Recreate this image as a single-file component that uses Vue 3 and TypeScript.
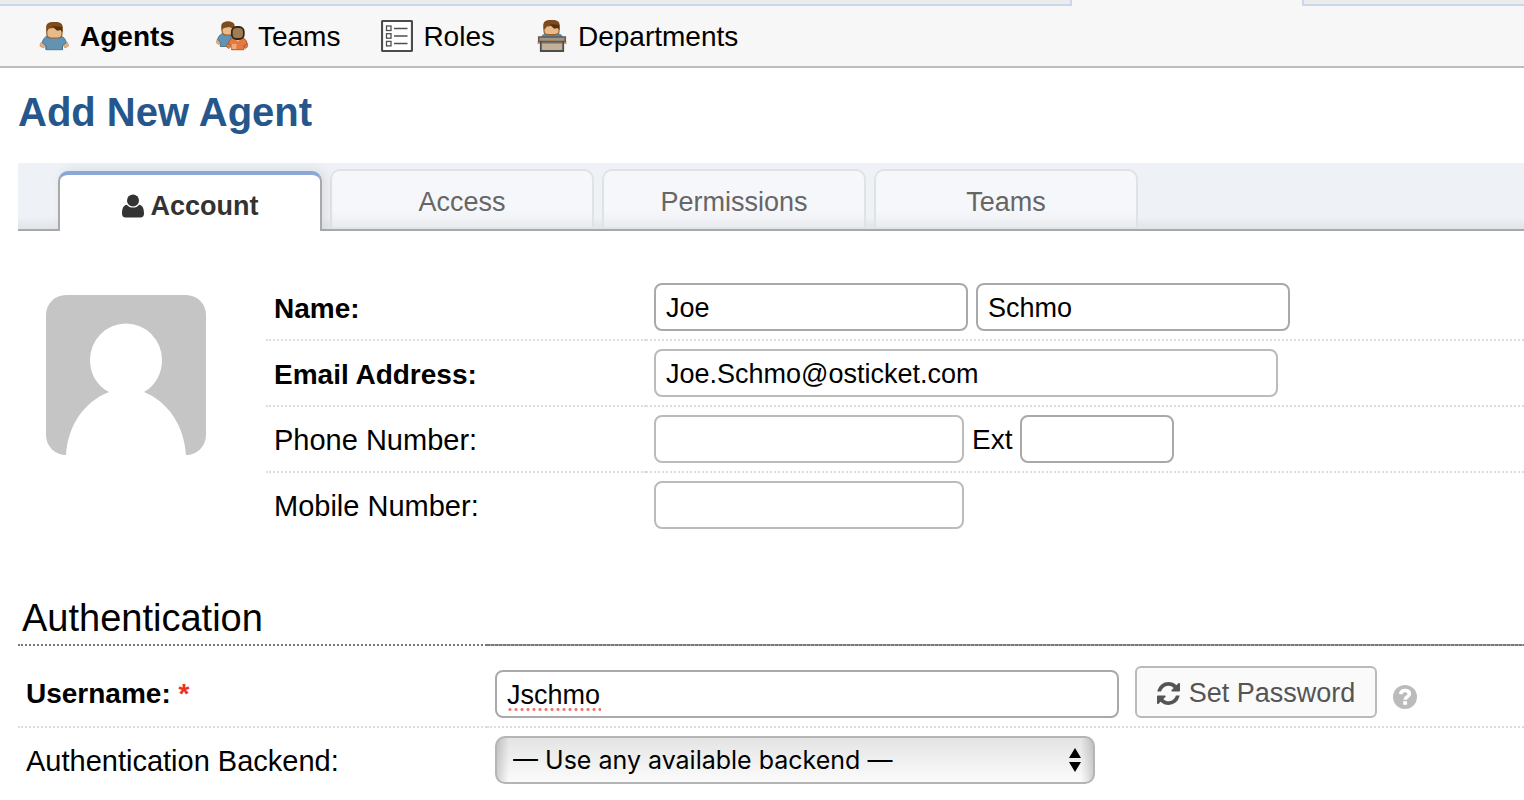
<script setup lang="ts">
import { ref } from 'vue'

interface NavItem {
  id: 'agents' | 'teams' | 'roles' | 'departments'
  label: string
}

const navItems: NavItem[] = [
  { id: 'agents', label: 'Agents' },
  { id: 'teams', label: 'Teams' },
  { id: 'roles', label: 'Roles' },
  { id: 'departments', label: 'Departments' },
]
const activeNav = 'agents'

const tabs: string[] = ['Account', 'Access', 'Permissions', 'Teams']
const activeTab = ref('Account')

const firstName = ref('Joe')
const lastName = ref('Schmo')
const email = ref('Joe.Schmo@osticket.com')
const phone = ref('')
const extension = ref('')
const mobile = ref('')
const username = ref('Jschmo')
const backend = ref('')
</script>

<template>
  <div class="page">
    <div class="strip">
      <span class="strip-left"></span>
      <span class="strip-current"></span>
      <span class="strip-right"></span>
    </div>

    <nav class="subnav">
      <a
        v-for="item in navItems"
        :key="item.id"
        href="#"
        class="subnav-item"
        :class="{ current: item.id === activeNav }"
      >
        <svg v-if="item.id === 'agents'" class="nav-icon" viewBox="0 0 32 32" aria-hidden="true">
          <path d="M6 20.500C3.500 21.500 2 23.500 2 26l3.500 2 2-3zM26.500 20.500c2.500 1 4 3 4 5.500l-3.500 2-2-3z" fill="#e3b083" stroke="#c9935f" stroke-width="0.800" />
          <path d="M10 16C6.500 17 4.500 19.500 4.500 23l3.500 2.500v4.200h16.500v-4.200L28 23c0-3.500-2-6-5.500-7z" fill="#6393b2" stroke="#4d7b96" />
          <path d="M8 25.500v4M24.500 25.500v4" stroke="#41708d" fill="none" />
          <path d="M8.800 7c0-3 2-4.500 7.500-4.500s7.700 1.500 7.700 4.500v7c0 2.500-2 4-4 4h-7c-2.200 0-4.200-1.500-4.200-4z" fill="#e8bb88" stroke="#94602f" stroke-width="1.200" />
          <path d="M8.500 12V7c0-3 3-5 8-5s8 2 8 5v5.500l-1.500-2.500-4 .5L16 8l-5 .5z" fill="#7c4b1e" />
          <path d="M14 6l10 1 .5 5-2-2-3.500.5z" fill="#54330f" />
        </svg>
        <svg v-else-if="item.id === 'teams'" class="nav-icon" viewBox="0 0 32 32" aria-hidden="true">
          <path d="M3 17.500C1 19 .5 20.500.5 23l2.500 1.500 3-3z" fill="#e3b083" stroke="#c9935f" stroke-width="0.800" />
          <path d="M6.500 13.500C3.500 15 1.800 17 1.800 20l2.500 2v4.500H15v-13z" fill="#6393b2" stroke="#4d7b96" />
          <path d="M6 6c0-2.500 2-4 6-4s6 1.500 6 4v5c0 2.500-2 4-4 4h-4c-2 0-4-1.500-4-4z" fill="#e8bb88" stroke="#94602f" stroke-width="1.200" />
          <path d="M5.500 10V6c0-3 3-4.500 6.500-4.500S18.500 3 18.500 6v3L13 7l-5 1z" fill="#7c4b1e" />
          <path d="M13 22.500c-2 1-2.500 2.500-2.500 4.500l2.500 1.500 3-3zM29.500 22c1.800 1 2.300 2.500 2.300 4.500l-2.300 2-3-3z" fill="#c98350" stroke="#a9603a" stroke-width="0.800" />
          <path d="M17 18c-3 .8-4.500 3-4.500 6l3 1.500v4.200h12.500v-4.200l3-1.500c0-3-1.500-5.200-4.500-6z" fill="#e6793f" stroke="#bb552b" />
          <path d="M15.500 24h5v5h-5z" fill="#f3a878" />
          <path d="M18 18.500h7.500l-3.500 3z" fill="#f4c196" />
          <rect x="15.800" y="7" width="12" height="12" rx="4.500" fill="#a17c50" stroke="#33291f" stroke-width="1.800" />
        </svg>
        <svg v-else-if="item.id === 'roles'" class="nav-icon" viewBox="0 0 32 32" aria-hidden="true">
          <rect x="1" y="1" width="30" height="30" rx="1" fill="#fff" stroke="#4b4b4b" stroke-width="2.200" />
          <g fill="none" stroke="#4f4f4f" stroke-width="1.300">
            <rect x="5.500" y="6" width="4.500" height="4.500" />
            <rect x="5.500" y="13.700" width="4.500" height="4.500" />
            <rect x="5.500" y="21.400" width="4.500" height="4.500" />
            <path d="M13 8.500h13.500M13 16h13.500M13 23.500h13.500" stroke-width="1.600" />
          </g>
        </svg>
        <svg v-else class="nav-icon" viewBox="0 0 32 32" aria-hidden="true">
          <path d="M5 17c1-2.500 3-3.500 6-4h10c3 .5 5 1.500 6 4z" fill="#5587aa" />
          <path d="M8 5c0-3 2-4.500 7.500-4.500S23 2 23 5v6c0 2.500-2 3.500-4 3.500h-7c-2 0-4-1-4-3.500z" fill="#e8bb88" stroke="#94602f" stroke-width="1.200" />
          <path d="M7.500 9V5c0-3 3-5 8-5s8 2 8 5v5L22 8l-4 .5L15 6l-4 .5L9 9z" fill="#7c4b1e" />
          <path d="M14 4l9 1 .5 5L22 8l-4 .5z" fill="#54330f" />
          <path d="M1.500 21.500h3V24h-3zM27.500 21.500h3V24h-3z" fill="#e49a50" />
          <path d="M2.700 17h26.600v4.500H2.700z" fill="#a3947f" stroke="#5d5a55" stroke-width="1.500" />
          <path d="M4.800 22h22.400v9H4.800z" fill="#c3b099" stroke="#4f4d4a" stroke-width="1.800" />
          <path d="M5.700 22.500h20.600" stroke="#786d60" stroke-width="2" />
        </svg>
        <span class="nav-label">{{ item.label }}</span>
      </a>
    </nav>

    <main class="content">
      <h1>Add New Agent</h1>

      <div class="tabs" role="tablist">
        <button
          v-for="tab in tabs"
          :key="tab"
          type="button"
          role="tab"
          class="tab"
          :class="{ active: tab === activeTab }"
          :aria-selected="tab === activeTab"
          @click="activeTab = tab"
        >
          <svg v-if="tab === 'Account'" class="tab-icon" viewBox="0 0 22 24" aria-hidden="true">
            <circle cx="11" cy="6.500" r="6" />
            <path d="M4.800 10.800C6.300 12.800 8.500 13.600 11 13.600s4.700-.8 6.200-2.800C20.700 11.300 22 15 22 19.500c0 2.700-1.300 4-3.500 4h-15C1.300 23.500 0 22.200 0 19.500c0-4.500 1.300-8.200 4.800-8.700z" />
          </svg>
          <span>{{ tab }}</span>
        </button>
      </div>

      <form @submit.prevent>
        <section class="profile">
          <svg class="avatar" viewBox="0 0 160 160" role="img" aria-label="Avatar">
            <rect width="160" height="160" fill="#c5c5c5" />
            <path d="M20 160C22 130 38 107 63 97C50 90 44 78 44 65a36 36.500 0 0 1 72 0C116 78 110 90 98 97C122 107 138 130 140 160z" fill="#fff" />
          </svg>
          <table class="fields">
            <tbody>
              <tr>
                <th scope="row" class="required"><label for="first-name">Name:</label></th>
                <td>
                  <div class="controls">
                    <input id="first-name" v-model="firstName" class="text strong name" type="text" />
                    <input v-model="lastName" class="text strong name" type="text" aria-label="Last name" />
                  </div>
                </td>
              </tr>
              <tr>
                <th scope="row" class="required"><label for="email">Email Address:</label></th>
                <td>
                  <div class="controls">
                    <input id="email" v-model="email" class="text wide" type="email" />
                  </div>
                </td>
              </tr>
              <tr>
                <th scope="row"><label for="phone">Phone Number:</label></th>
                <td>
                  <div class="controls">
                    <input id="phone" v-model="phone" class="text phone" type="tel" />
                    <label for="ext" class="inline-label">Ext</label>
                    <input id="ext" v-model="extension" class="text strong ext" type="text" />
                  </div>
                </td>
              </tr>
              <tr>
                <th scope="row"><label for="mobile">Mobile Number:</label></th>
                <td>
                  <div class="controls">
                    <input id="mobile" v-model="mobile" class="text phone" type="tel" />
                  </div>
                </td>
              </tr>
            </tbody>
          </table>
        </section>

        <section class="auth">
          <div class="section-head">
            <h2>Authentication</h2>
            <span class="section-rule"></span>
          </div>
          <table class="fields">
            <tbody>
              <tr>
                <th scope="row" class="required">
                  <label for="username">Username: <span class="star">*</span></label>
                </th>
                <td>
                  <div class="controls account">
                    <span class="spelled">
                      <input id="username" v-model="username" class="text strong wide" type="text" spellcheck="false" />
                      <span class="squiggle"></span>
                    </span>
                    <button type="button" class="action">
                      <svg class="refresh" viewBox="0 0 1536 1536" aria-hidden="true">
                        <path d="M1511 928q0 5-1 7-64 268-268 434.500T764 1536q-146 0-282.500-55T238 1324l-129 129q-19 19-45 19t-45-19-19-45V960q0-26 19-45t45-19h448q26 0 45 19t19 45-19 45l-137 137q71 66 161 102t187 36q134 0 250-65t186-179q11-17 53-117 8-23 30-23h192q13 0 22.500 9.500t9.500 22.500zm25-800v448q0 26-19 45t-45 19h-448q-26 0-45-19t-19-45 19-45l138-138Q969 256 768 256q-134 0-250 65T332 500q-11 17-53 117-8 23-30 23H50q-13 0-22.500-9.500T18 608v-7q65-268 270-434.500T768 0q146 0 284 55.500T1297 212l130-129q19-19 45-19t45 19 19 45z" />
                      </svg>
                      <span>Set Password</span>
                    </button>
                    <a href="#" class="help" aria-label="Help">
                      <svg viewBox="0 0 24 24" aria-hidden="true">
                        <circle cx="12" cy="12" r="12" fill="#bbb" />
                        <path d="M7.500 9.200C8 6.600 9.600 5.500 12 5.500c2.700 0 4.400 1.400 4.400 3.400 0 2.900-4.300 2.700-4.300 5.800" fill="none" stroke="#fff" stroke-width="3.600" />
                        <rect x="10.200" y="16.200" width="3.800" height="3.600" fill="#fff" />
                      </svg>
                    </a>
                  </div>
                </td>
              </tr>
              <tr>
                <th scope="row"><label for="backend">Authentication Backend:</label></th>
                <td>
                  <div class="controls">
                    <span class="picker">
                      <select id="backend" v-model="backend">
                        <option value="">— Use any available backend —</option>
                      </select>
                      <svg class="arrows" viewBox="0 0 12 24" aria-hidden="true">
                        <path d="M6 0l6 10H0zM6 24l6-10H0z" />
                      </svg>
                    </span>
                  </div>
                </td>
              </tr>
            </tbody>
          </table>
        </section>
      </form>
    </main>
  </div>
</template>

<style>
body {
  margin: 0;
  background: #fff;
  overflow: hidden;
}
</style>

<style scoped>
.page,
.page button,
.page input {
  font-family: 'Liberation Sans', Arial, sans-serif;
}
.page {
  color: #000;
  font-size: 28px;
  line-height: 32px;
}
.page * {
  box-sizing: border-box;
}
.page svg {
  display: block;
  flex: none;
}

.strip {
  display: grid;
  grid-template-columns: 1072px 230px 1fr;
  height: 6px;
  background: #f7f7f7;
}
.strip-left,
.strip-right {
  background: #ececec;
  border-bottom: 2px solid #c8d7ea;
}
.strip-left {
  border-right: 2px solid #c8d7ea;
}
.strip-right {
  border-left: 2px solid #c8d7ea;
}

.subnav {
  display: flex;
  align-items: center;
  gap: 41px;
  height: 62px;
  padding: 0 38px;
  background: #f7f7f7;
  border-bottom: 2px solid #bdbdbd;
}
.subnav-item {
  display: flex;
  align-items: center;
  gap: 10px;
  color: #000;
  text-decoration: none;
}
.subnav-item.current {
  font-weight: bold;
}
.nav-icon {
  width: 32px;
  height: 32px;
}
.nav-label {
  padding-top: 2px;
}

.content {
  padding-left: 18px;
}
h1 {
  margin: 0;
  padding: 20px 0 27px;
  color: #25568c;
  font-size: 40px;
  line-height: 48px;
}

.tabs {
  display: flex;
  align-items: flex-end;
  gap: 8px;
  height: 68px;
  padding-left: 40px;
  border-bottom: 2px solid #a9a9a9;
  background: linear-gradient(to top, #e0e4e8, #eef2f7 12px);
}
.tab {
  display: flex;
  align-items: center;
  justify-content: center;
  gap: 7px;
  width: 264px;
  height: 58px;
  margin-bottom: 2px;
  padding: 6px 0 0;
  border: 2px solid #e1e2e3;
  border-bottom: 0;
  border-radius: 10px 10px 0 0;
  background: linear-gradient(to top, #e9ebee, #f3f4f7 10px, #f6f7fb 18px);
  color: #666;
  font-size: 27px;
  line-height: 32px;
}
.tab.active {
  height: 60px;
  margin-bottom: -2px;
  border-color: #a9a9a9;
  border-top: 4px solid #8aa7d6;
  background: #fff;
  box-shadow: 4px -2px 12px rgba(0, 0, 0, 0.08);
  clip-path: inset(-10px -12px 0 -12px);
  color: #333;
  font-weight: bold;
}
.tab-icon {
  width: 22px;
  height: 24px;
  fill: #333;
}

.profile {
  display: flex;
  align-items: flex-start;
  gap: 60px;
  padding: 44px 0 0 28px;
}
.avatar {
  width: 160px;
  height: 160px;
  margin-top: 20px;
  border-radius: 20px;
}

.fields {
  width: 100%;
  border-collapse: separate;
  border-spacing: 0;
  table-layout: fixed;
}
.fields th,
.fields td {
  padding: 8px;
  border-bottom: 2px dotted #ddd;
  text-align: left;
  font-weight: normal;
}
.fields tr:last-child th,
.fields tr:last-child td {
  border-bottom: 0;
}
.fields th {
  width: 380px;
  padding-top: 10px;
  font-size: 29px;
}
.fields td {
  padding-right: 0;
}
.fields th.required {
  padding-top: 12px;
  font-size: 28px;
  font-weight: bold;
}
.controls {
  display: flex;
  align-items: center;
  gap: 8px;
}
.inline-label {
  padding-top: 2px;
}
.text {
  height: 48px;
  padding: 2px 10px 0;
  border: 2px solid #bbb;
  border-radius: 8px;
  background: #fff;
  color: #000;
  font-size: 27px;
}
.text.strong {
  border-color: #a9a9a9;
}
.name {
  width: 314px;
}
.wide {
  width: 624px;
}
.phone {
  width: 310px;
}
.ext {
  width: 154px;
}

.auth {
  padding-top: 56px;
}
.section-head {
  display: flex;
  align-items: flex-end;
  margin-bottom: 12px;
}
h2 {
  width: 469px;
  margin: 0;
  padding: 4px 4px 5px;
  border-bottom: 2px dotted #777;
  font-size: 38px;
  font-weight: normal;
  line-height: 42px;
}
.section-rule {
  flex: 1;
  height: 2px;
  background: repeating-linear-gradient(to right, #777 0 3px, #a8a8a8 3px 4px);
}
.auth .fields th {
  width: 469px;
}
.star {
  color: #e8341f;
}
.account {
  align-items: flex-end;
  gap: 16px;
}
.spelled,
.picker {
  position: relative;
  display: flex;
}
.squiggle {
  position: absolute;
  left: 12px;
  bottom: 7px;
  width: 94px;
  height: 3px;
  background: radial-gradient(circle, #f0716a 1px, transparent 2px) 0 0 / 6px 3px;
}
.action {
  display: flex;
  align-items: center;
  justify-content: center;
  gap: 9px;
  width: 242px;
  height: 52px;
  padding: 2px 0 0;
  border: 2px solid #bbb;
  border-radius: 6px;
  background: #fafafa;
  color: #555;
  font-size: 27px;
  line-height: 32px;
}
.refresh {
  width: 23px;
  height: 23px;
  fill: #555;
}
.help {
  width: 24px;
  margin-bottom: 9px;
}
select {
  width: 600px;
  height: 48px;
  padding: 0 16px;
  appearance: none;
  border: 2px solid #b5b5b5;
  border-radius: 10px;
  background:
    linear-gradient(to right, rgba(0, 0, 0, 0.16), transparent 12px, transparent calc(100% - 12px), rgba(0, 0, 0, 0.16)),
    linear-gradient(#e4e4e4, #fbfbfb);
  color: #000;
  font-family: Inter, 'Liberation Sans', sans-serif;
  font-size: 25px;
}
.arrows {
  position: absolute;
  top: 12px;
  right: 14px;
  width: 12px;
  height: 24px;
}
</style>
